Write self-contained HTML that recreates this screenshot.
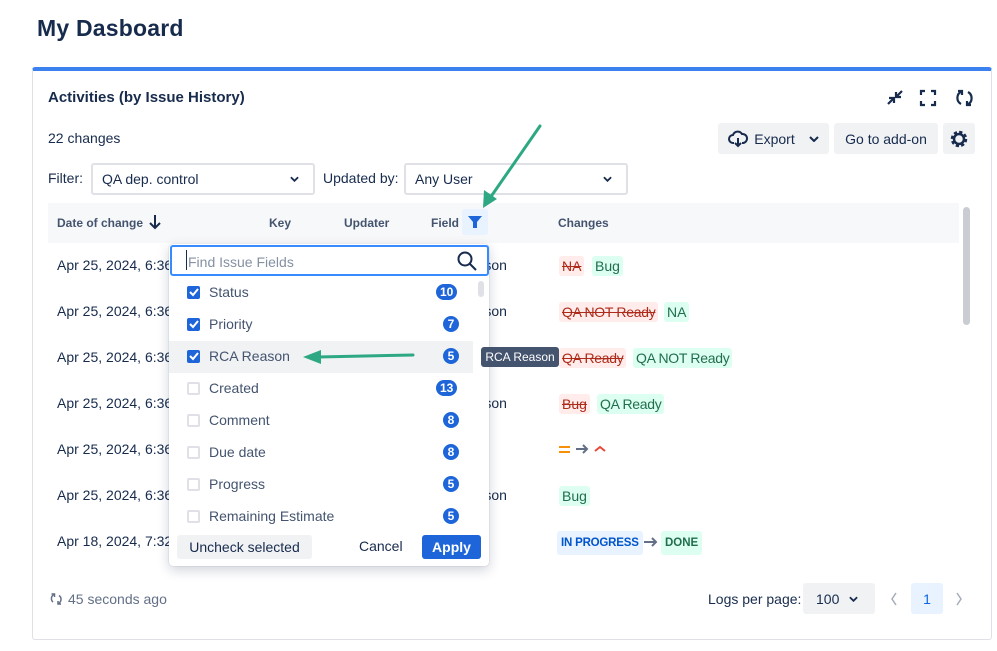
<!DOCTYPE html>
<html><head><meta charset="utf-8"><style>
*{box-sizing:border-box;margin:0;padding:0}
body{width:997px;height:651px;background:#fff;font-family:"Liberation Sans",Arial,sans-serif;color:#172B4D;position:relative;overflow:hidden;font-size:14px}
.a{position:absolute;white-space:nowrap}
.card{position:absolute;left:32px;top:67px;width:960px;height:573px;border:1px solid #dfe1e6;border-top:4px solid #3b82f0;border-radius:3px;background:#fff}
.btn{position:absolute;background:#f1f2f4;border-radius:3px;font-size:14px;display:flex;align-items:center;justify-content:center;white-space:nowrap}
.sel{position:absolute;border:2px solid #dfe1e6;border-radius:3px;height:32px;font-size:14px;padding:6px 9px}
.hd{font-size:12px;font-weight:bold;color:#44546f}
.lz{position:absolute;padding:1px 3px;border-radius:3px;font-size:14px;line-height:18px;white-space:nowrap}
.r{background:#ffeceb;color:#ae2a19;text-decoration:line-through}
.g{background:#dcfff1;color:#216e4e}
.cb{position:absolute;left:187px;width:13px;height:13px;border-radius:2px;border:2px solid #dfe1e6;background:#fff}
.cb.on{background:#1d65d8;border-color:#1d65d8}
.badge{position:absolute;background:#1d65d8;color:#fff;font-size:12px;font-weight:bold;height:16px;line-height:16px;border-radius:8px;text-align:center;min-width:16px;padding:0 4px}
.it{position:absolute;left:209px;font-size:14px;color:#44546f;white-space:nowrap}
</style></head><body>
<div class="a" style="left:37px;top:15px;font-size:23px;font-weight:bold;color:#172B4D;letter-spacing:0.2px">My Dasboard</div>
<div class="card"></div>
<div class="a" style="left:48px;top:89px;font-size:15px;font-weight:bold">Activities (by Issue History)</div>
<svg class="a" style="left:885px;top:88px" width="90" height="20" viewBox="0 0 90 20" fill="none" stroke="#172B4D" stroke-width="2.2">
<path d="M3 16 L9 10 M4 10 H9 V15 M17 3 L11 9 M11 4 V9 H16"/>
<path d="M36 7 V3 H40 M46 3 H50 V7 M50 13 V17 H46 M40 17 H36 V13"/>
<path d="M76 16 A7 7 0 0 1 76.5 3.5 M83 4 A7 7 0 0 1 82.5 16.5"/>
<path d="M73 3 H77 V7 M86 17 H82 V13"/>
</svg>
<div class="a" style="left:48px;top:130px">22 changes</div>
<div class="btn" style="left:718px;top:123px;width:111px;height:31px;gap:6px"><svg width="20" height="18" viewBox="0 0 20 18" fill="none" stroke="#172B4D" stroke-width="2"><path d="M6 13 H5 A4 4 0 0 1 5 5 A5 5 0 0 1 14 4 A4 4 0 0 1 15 13 H14"/><path d="M10 8 V16 M7 13 L10 16 L13 13"/></svg><span>Export</span><svg style="margin-left:8px" width="10" height="6" viewBox="0 0 10 6" fill="none" stroke="#172B4D" stroke-width="2"><path d="M1 1 L5 5 L9 1"/></svg></div>
<div class="btn" style="left:834px;top:123px;width:104px;height:31px">Go to add-on</div>
<div class="btn" style="left:943px;top:123px;width:32px;height:31px"><svg width="20" height="20" viewBox="0 0 20 20"><circle cx="10" cy="10" r="6.5" fill="none" stroke="#172B4D" stroke-width="3.5" stroke-dasharray="3 2.1"/><circle cx="10" cy="10" r="5" fill="none" stroke="#172B4D" stroke-width="2.5"/></svg></div>
<div class="a" style="left:48px;top:170px">Filter:</div>
<div class="sel" style="left:91px;top:163px;width:224px">QA dep. control<svg style="position:absolute;right:14px;top:11px" width="9" height="6" viewBox="0 0 10 6" fill="none" stroke="#172B4D" stroke-width="2"><path d="M1 1 L5 5 L9 1"/></svg></div>
<div class="a" style="left:323px;top:170px">Updated by:</div>
<div class="sel" style="left:404px;top:163px;width:224px">Any User<svg style="position:absolute;right:14px;top:11px" width="9" height="6" viewBox="0 0 10 6" fill="none" stroke="#172B4D" stroke-width="2"><path d="M1 1 L5 5 L9 1"/></svg></div>
<div class="a" style="left:48px;top:203px;width:911px;height:40px;background:#f7f8f9"></div>
<div class="a hd" style="left:57px;top:216px">Date of change</div>
<svg class="a" style="left:148px;top:214px" width="14" height="16" viewBox="0 0 14 16" fill="none" stroke="#172B4D" stroke-width="2"><path d="M7 1 V14 M2 9 L7 14 L12 9"/></svg>
<div class="a hd" style="left:269px;top:216px">Key</div>
<div class="a hd" style="left:344px;top:216px">Updater</div>
<div class="a hd" style="left:431px;top:216px">Field</div>
<div class="a" style="left:462px;top:209px;width:26px;height:26px;background:#e9f2ff;border-radius:3px"></div>
<svg class="a" style="left:467px;top:215px" width="16" height="14" viewBox="0 0 16 14"><path d="M1 1 H15 L10 7 V13 L6 13 V7 Z" fill="#1d65d8"/></svg>
<div class="a hd" style="left:558px;top:216px">Changes</div>
<div class="a" style="left:963px;top:207px;width:7px;height:118px;background:#c9ccd1;border-radius:4px"></div>
<div class="a" style="left:57px;top:257px">Apr 25, 2024, 6:36</div>
<div class="a" style="left:57px;top:303px">Apr 25, 2024, 6:36</div>
<div class="a" style="left:57px;top:349px">Apr 25, 2024, 6:36</div>
<div class="a" style="left:57px;top:395px">Apr 25, 2024, 6:36</div>
<div class="a" style="left:57px;top:441px">Apr 25, 2024, 6:36</div>
<div class="a" style="left:57px;top:487px">Apr 25, 2024, 6:36</div>
<div class="a" style="left:57px;top:533px">Apr 18, 2024, 7:32</div>
<div class="a" style="left:426px;top:257px">RCA Reason</div>
<div class="a" style="left:426px;top:303px">RCA Reason</div>
<div class="a" style="left:426px;top:395px">RCA Reason</div>
<div class="a" style="left:426px;top:487px">RCA Reason</div>
<div class="lz r" style="left:559px;top:256px">NA</div><div class="lz g" style="left:592px;top:256px">Bug</div>
<div class="lz r" style="left:559px;top:302px;letter-spacing:-0.3px">QA NOT Ready</div><div class="lz g" style="left:664px;top:302px">NA</div>
<div class="lz r" style="left:559px;top:348px;letter-spacing:-0.3px">QA Ready</div><div class="lz g" style="left:633px;top:348px;letter-spacing:-0.3px">QA NOT Ready</div>
<div class="lz r" style="left:559px;top:394px">Bug</div><div class="lz g" style="left:597px;top:394px;letter-spacing:-0.3px">QA Ready</div>
<svg class="a" style="left:558px;top:442px" width="52" height="14" viewBox="0 0 52 14" fill="none" stroke-width="2"><path d="M1 5 H12 M1 10 H12" stroke="#f79009"/><path d="M18 7 H29 M25 3 L29 7 L25 11" stroke="#626f86"/><path d="M37 9 L42 5 L47 9" stroke="#e5493a"/></svg>
<div class="lz g" style="left:559px;top:486px">Bug</div>
<div class="lz" style="left:557px;top:531px;background:#e9f2ff;color:#0055cc;font-size:11.5px;font-weight:bold;padding:3px 4px;letter-spacing:-0.2px">IN PROGRESS</div>
<svg class="a" style="left:643px;top:535px" width="16" height="14" viewBox="0 0 16 14" fill="none" stroke="#626f86" stroke-width="2"><path d="M1 7 H13 M9 3 L13 7 L9 11"/></svg>
<div class="lz" style="left:661px;top:531px;background:#dcfff1;color:#216e4e;font-size:11.5px;font-weight:bold;padding:3px 4px">DONE</div>
<svg class="a" style="left:50px;top:592px" width="13" height="14" viewBox="0 0 13 14" fill="none" stroke="#626f86" stroke-width="1.5"><path d="M3 10 A4.5 4.5 0 0 1 4 2.5 M9 3.5 A4.5 4.5 0 0 1 8 11.5"/><path d="M1.5 2 H4.5 V5 M11 12 H8 V9"/></svg>
<div class="a" style="left:68px;top:591px;color:#626f86;font-size:14px">45 seconds ago</div>
<div class="a" style="left:708px;top:591px">Logs per page:</div>
<div class="btn" style="left:803px;top:583px;width:72px;height:31px;justify-content:flex-start;padding-left:13px">100<svg style="margin-left:10px" width="9" height="6" viewBox="0 0 10 6" fill="none" stroke="#172B4D" stroke-width="2"><path d="M1 1 L5 5 L9 1"/></svg></div>
<svg class="a" style="left:890px;top:592px" width="8" height="14" viewBox="0 0 8 14" fill="none" stroke="#a5adba" stroke-width="1.5"><path d="M6 1 L2 7 L6 13"/></svg>
<div class="btn" style="left:911px;top:583px;width:32px;height:31px;background:#e9f2ff;color:#0c66e4">1</div>
<svg class="a" style="left:955px;top:592px" width="8" height="14" viewBox="0 0 8 14" fill="none" stroke="#a5adba" stroke-width="1.5"><path d="M2 1 L6 7 L2 13"/></svg>
<div class="a" style="left:169px;top:244px;width:320px;height:322px;background:#fff;border-radius:4px;box-shadow:0 4px 12px rgba(9,30,66,.2),0 0 1px rgba(9,30,66,.3)"></div>
<div class="a" style="left:170px;top:245px;width:319px;height:31px;border:2px solid #388bff;border-radius:3px;background:#fff"></div>
<div class="a" style="left:186px;top:250px;width:1px;height:20px;background:#172B4D"></div>
<div class="a" style="left:188px;top:254px;color:#8590a2">Find Issue Fields</div>
<svg class="a" style="left:457px;top:251px" width="20" height="20" viewBox="0 0 20 20" fill="none" stroke="#172B4D" stroke-width="2"><circle cx="8" cy="8" r="6.5"/><path d="M13 13 L19 19"/></svg>
<div class="a" style="left:478px;top:281px;width:6px;height:16px;background:#dfe1e6;border-radius:3px"></div>
<div class="a" style="left:169px;top:341px;width:304px;height:32px;background:#f1f2f4"></div>
<div class="cb on" style="top:286px"></div><div class="it" style="top:284px">Status</div><div class="badge" style="left:436px;top:284px">10</div>
<div class="cb on" style="top:318px"></div><div class="it" style="top:316px">Priority</div><div class="badge" style="left:443px;top:316px">7</div>
<div class="cb on" style="top:350px"></div><div class="it" style="top:348px">RCA Reason</div><div class="badge" style="left:443px;top:348px">5</div>
<div class="cb" style="top:382px"></div><div class="it" style="top:380px">Created</div><div class="badge" style="left:436px;top:380px">13</div>
<div class="cb" style="top:414px"></div><div class="it" style="top:412px">Comment</div><div class="badge" style="left:443px;top:412px">8</div>
<div class="cb" style="top:446px"></div><div class="it" style="top:444px">Due date</div><div class="badge" style="left:443px;top:444px">8</div>
<div class="cb" style="top:478px"></div><div class="it" style="top:476px">Progress</div><div class="badge" style="left:443px;top:476px">5</div>
<div class="cb" style="top:510px"></div><div class="it" style="top:508px">Remaining Estimate</div><div class="badge" style="left:443px;top:508px">5</div>
<svg class="a" style="left:188px;top:284px" width="12" height="260" viewBox="0 0 12 260" fill="none" stroke="#fff" stroke-width="2"><path d="M2 8 L5 11 L10 5 M2 40 L5 43 L10 37 M2 72 L5 75 L10 69"/></svg>
<div class="btn" style="left:177px;top:535px;width:135px;height:24px;color:#172B4D">Uncheck selected</div>
<div class="a" style="left:359px;top:538px">Cancel</div>
<div class="btn" style="left:422px;top:535px;width:59px;height:24px;background:#1d65d8;color:#fff;font-weight:bold">Apply</div>
<div class="a" style="left:481px;top:347px;width:78px;height:20px;background:#44546f;color:#fff;border-radius:3px;font-size:12px;line-height:20px;text-align:center">RCA Reason</div>
<svg class="a" style="left:0;top:0" width="997" height="651" viewBox="0 0 997 651" fill="none">
<path d="M540 126 L490 198" stroke="#2ea883" stroke-width="3" stroke-linecap="round"/>
<path d="M483 208 L484 190 L497 199 Z" fill="#2ea883"/>
<path d="M413 355 L318 357" stroke="#2ea883" stroke-width="3" stroke-linecap="round"/>
<path d="M303 357 L321 350 L321 364 Z" fill="#2ea883"/>
</svg>
</body></html>
